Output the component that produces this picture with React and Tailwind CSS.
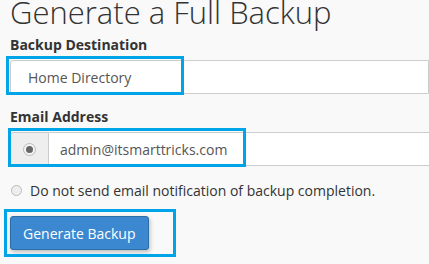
export default function App() {
  return (
    <div className="relative w-[429px] h-[264px] overflow-hidden bg-[#f9f9f9] font-['Open_Sans',sans-serif] text-[#333]">
      <div className="flex flex-col pl-[10px]">
        <h1 className="mt-[-3px] text-[31px] leading-[31px] font-light text-[#333] whitespace-nowrap">
          Generate a Full Backup
        </h1>

        <label className="mt-[7px] text-[14px] leading-[20px] font-bold">Backup Destination</label>
        <div className="mt-[5px] flex items-center h-[34px] bg-white border border-[#ccc] rounded-l-[3px] pl-[17px] text-[14px] text-[#555]">
          Home Directory
        </div>

        <label className="mt-[13px] text-[14px] leading-[20px] font-bold">Email Address</label>
        <div className="mt-[5px] flex h-[34px]">
          <div className="w-[39px] flex items-center justify-center bg-[#eee] border border-[#ccc] rounded-l-[3px]">
            <span className="w-[13px] h-[13px] rounded-full border border-[#bbb] bg-[#f4f4f4] flex items-center justify-center">
              <span className="w-[7px] h-[7px] rounded-full bg-[#666]" />
            </span>
          </div>
          <div className="flex-1 flex items-center bg-white border-y border-[#ccc] pl-[11px] text-[14px] text-[#555]">
            admin@itsmarttricks.com
          </div>
        </div>

        <div className="mt-[14px] flex items-center h-[20px] text-[14px]">
          <span className="ml-[1px] w-[11px] h-[11px] rounded-full border border-[#bbb] bg-[#eee]" />
          <span className="ml-[8px]">Do not send email notification of backup completion.</span>
        </div>

        <div className="mt-[16px]">
          <button className="h-[34px] px-[12px] bg-[#3b88d0] border border-[#2d6ea8] rounded-[3px] text-white text-[14px] shadow-[1px_2px_4px_rgba(0,0,0,0.25)]">
            Generate Backup
          </button>
        </div>
      </div>

      {/* highlight boxes */}
      <div className="absolute left-[6px] top-[56px] w-[178px] h-[39px] border-[3px] border-[#00a5e8]" />
      <div className="absolute left-[8px] top-[128px] w-[238px] h-[39px] border-[3px] border-[#00a5e8]" />
      <div className="absolute left-[4px] top-[209px] w-[172px] h-[48px] border-[3px] border-[#00a5e8]" />
    </div>
  );
}
